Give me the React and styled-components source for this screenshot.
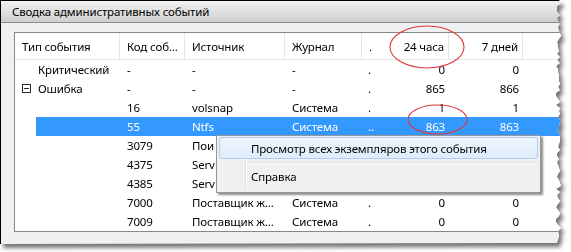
import styled, { createGlobalStyle } from "styled-components";

const GlobalStyle = createGlobalStyle`
  html, body {
    margin: 0;
    padding: 0;
    background: #ffffff;
  }
  body {
    font-family: "Noto Sans", "Open Sans", sans-serif;
    font-size: 11.5px;
    letter-spacing: -0.15px;
    color: #000;
  }
`;

// torn right edge of the cut-out screenshot
const tornEdge = (() => {
  let s = 11;
  const rnd = () => {
    s = (s * 9301 + 49297) % 233280;
    return s / 233280;
  };
  const pts = ["0 0"];
  for (let y = 0; y <= 244; y += 3) {
    pts.push(`${556 + Math.round(rnd() * 5)}px ${y}px`);
  }
  pts.push("0 244px");
  return `polygon(${pts.join(", ")})`;
})();

const Page = styled.div`
  position: relative;
  width: 571px;
  height: 252px;
  overflow: hidden;
`;

const ShadowWrap = styled.div`
  filter: drop-shadow(3px 4px 2px rgba(0, 0, 0, 0.55));
`;

const Window = styled.div`
  width: 566px;
  height: 244px;
  box-sizing: border-box;
  background: #f0f0f0;
  border-top: 1px solid #000;
  border-left: 1px solid #000;
  clip-path: ${tornEdge};
  display: flex;
  flex-direction: column;
`;

const TitleBar = styled.div`
  height: 21px;
  flex: none;
  display: flex;
  align-items: center;
  padding-left: 11px;
  background: linear-gradient(#f2f2f2, #e2e2e2 45%, #cfcfcf);
  border-bottom: 1px solid #8c8c8c;
`;

const Body = styled.div`
  padding: 9px 0 0 13px;
`;

const ListView = styled.div`
  width: 580px;
  background: #fff;
  border: 1px solid #828790;
  border-right: none;
`;

const HeaderRow = styled.div`
  display: flex;
  height: 26px;
  border-bottom: 1px solid #e8e8e8;
`;

const HeaderCell = styled.div`
  width: ${({ w }) => w}px;
  flex: none;
  box-sizing: border-box;
  display: flex;
  align-items: center;
  justify-content: ${({ right }) => (right ? "flex-end" : "flex-start")};
  padding: ${({ right }) => (right ? "0 4px 0 0" : "0 0 0 7px")};
  border-right: 1px solid ${({ plain }) => (plain ? "transparent" : "#e3e5e8")};
  white-space: nowrap;
  overflow: hidden;
`;

const Row = styled.div`
  display: flex;
  height: 19px;
`;

const Indent = styled.div`
  width: 21px;
  flex: none;
  display: flex;
  align-items: center;
  padding-left: 7px;
  box-sizing: border-box;
`;

const RowBody = styled.div`
  display: flex;
  flex: 1;
  background: ${({ selected }) => (selected ? "#3399ff" : "transparent")};
  color: ${({ selected }) => (selected ? "#fff" : "#000")};
`;

const Cell = styled.div`
  width: ${({ w }) => w}px;
  flex: none;
  box-sizing: border-box;
  display: flex;
  align-items: center;
  justify-content: ${({ right }) => (right ? "flex-end" : "flex-start")};
  padding: ${({ right, pad }) =>
    right ? "0 4px 0 0" : `0 0 0 ${pad ?? 7}px`};
  white-space: nowrap;
  overflow: hidden;
`;

const Expander = styled.div`
  width: 9px;
  height: 9px;
  box-sizing: border-box;
  border: 1px solid #2b2b2b;
  display: flex;
  align-items: center;
  justify-content: center;
  &::after {
    content: "";
    width: 5px;
    height: 1px;
    background: #2b2b2b;
  }
`;

const ContextMenu = styled.div`
  position: absolute;
  left: 216px;
  top: 135px;
  width: 325px;
  height: 58px;
  box-sizing: border-box;
  padding: 1px 2px 2px;
  background: #f0f0f0;
  border: 1px solid #979797;
  box-shadow: 2px 2px 2px rgba(0, 0, 0, 0.45);
  display: flex;
  flex-direction: column;
  &::before {
    content: "";
    position: absolute;
    left: 28px;
    top: 2px;
    bottom: 2px;
    width: 1px;
    background: #e2e3e3;
    border-right: 1px solid #fff;
  }
`;

const MenuItem = styled.div`
  position: relative;
  height: 22px;
  flex: none;
  box-sizing: border-box;
  display: flex;
  align-items: center;
  padding-left: 31px;
  border-radius: 3px;
  border: 1px solid ${({ active }) => (active ? "#aeceF4" : "transparent")};
  background: ${({ active }) =>
    active ? "linear-gradient(#eef5fd, #dfecfb)" : "transparent"};
  z-index: 1;
`;

const MenuSeparator = styled.div`
  height: 1px;
  flex: none;
  margin: 3px 0 1px 28px;
  background: #e0e0e0;
  border-bottom: 1px solid #fff;
`;

const Annotations = styled.svg`
  position: absolute;
  left: 0;
  top: 0;
  pointer-events: none;
`;

const cols = [
  { key: "type", label: "Тип события", w: 105 },
  { key: "code", label: "Код соб...", w: 65 },
  { key: "src", label: "Источник", w: 100 },
  { key: "log", label: "Журнал", w: 77 },
  { key: "dot", label: ".", w: 16, plain: true },
  { key: "day", label: "24 часа", w: 71, right: true },
  { key: "week", label: "7 дней", w: 74, right: true },
];

// rows 5-7 sit under the context menu: only the start of the source shows
const rows = [
  { type: "Критический", code: "-", src: "-", log: "-", dot: ".", day: "0", week: "0" },
  { type: "Ошибка", open: true, code: "-", src: "-", log: "-", dot: ".", day: "865", week: "866" },
  { code: "16", src: "volsnap", log: "Система", dot: ".", day: "1", week: "1" },
  { code: "55", src: "Ntfs", log: "Система", dot: "..", day: "863", week: "863", selected: true },
  { code: "3079", src: "Пои", hidden: true },
  { code: "4375", src: "Serv", hidden: true },
  { code: "4385", src: "Serv", hidden: true },
  { code: "7000", src: "Поставщик ж...", log: "Система", dot: ".", day: "0", week: "0" },
  { code: "7009", src: "Поставщик ж...", log: "Система", dot: ".", day: "0", week: "0" },
];

export default function App() {
  return (
    <>
      <GlobalStyle />
      <Page>
        <ShadowWrap>
          <Window>
            <TitleBar>Сводка административных событий</TitleBar>
            <Body>
              <ListView>
                <HeaderRow>
                  {cols.map((c) => (
                    <HeaderCell key={c.key} w={c.w} right={c.right} plain={c.plain}>
                      {c.label}
                    </HeaderCell>
                  ))}
                </HeaderRow>
                {rows.map((r, i) => (
                  <Row key={i}>
                    <Indent>{r.open && <Expander />}</Indent>
                    <RowBody selected={r.selected}>
                      {cols.map((c, j) => (
                        <Cell
                          key={c.key}
                          w={j === 0 ? c.w - 21 : r.hidden && c.key === "src" ? 31 : c.w}
                          right={c.right}
                          pad={j === 0 ? 2 : c.key === "dot" ? 6 : 7}
                        >
                          {r[c.key] ?? ""}
                        </Cell>
                      ))}
                    </RowBody>
                  </Row>
                ))}
              </ListView>
            </Body>
          </Window>
        </ShadowWrap>

        <ContextMenu>
          <MenuItem active>Просмотр всех экземпляров этого события</MenuItem>
          <MenuSeparator />
          <MenuItem>Справка</MenuItem>
        </ContextMenu>

        <Annotations width="571" height="252" viewBox="0 0 571 252">
          <ellipse cx="427" cy="47" rx="37" ry="21" fill="none" stroke="#e2353b" strokeWidth="1.1" />
          <ellipse cx="437.5" cy="119.5" rx="29.5" ry="14.5" fill="none" stroke="#e2353b" strokeWidth="1.1" />
        </Annotations>
      </Page>
    </>
  );
}
